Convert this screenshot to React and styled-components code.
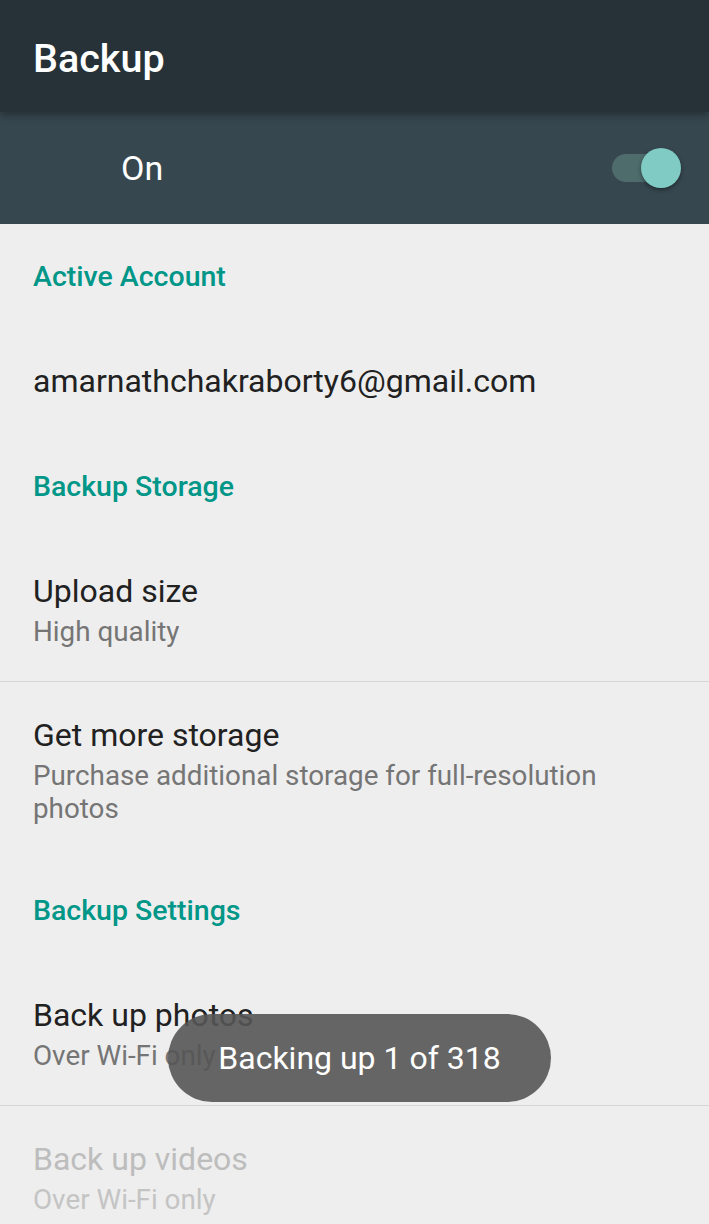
import React from "react";
import styled, { createGlobalStyle } from "styled-components";

const GlobalStyle = createGlobalStyle`
  html, body {
    margin: 0;
    padding: 0;
    background: #eeeeee;
  }
  body {
    font-family: Roboto, "Noto Sans", sans-serif;
    -webkit-font-smoothing: antialiased;
  }
`;

const Screen = styled.div`
  position: relative;
  width: 709px;
  height: 1224px;
  overflow: hidden;
  background: #eeeeee;
`;

const AppBar = styled.header`
  position: relative;
  z-index: 2;
  height: 112px;
  box-sizing: border-box;
  display: flex;
  align-items: center;
  padding: 5px 0 0 33px;
  background: #263238;
  box-shadow: 0 3px 8px rgba(0, 0, 0, 0.35);
`;

const Title = styled.h1`
  margin: 0;
  color: #ffffff;
  font-size: 39.5px;
  font-weight: 500;
`;

const SwitchBar = styled.div`
  height: 112px;
  display: flex;
  align-items: center;
  justify-content: space-between;
  padding: 0 28px 0 121px;
  background: #37474f;
`;

const SwitchLabel = styled.span`
  color: #ffffff;
  font-size: 34px;
`;

const Toggle = styled.div`
  position: relative;
  width: 69px;
  height: 40px;
`;

const Track = styled.div`
  position: absolute;
  left: 0;
  top: 6px;
  width: 52px;
  height: 28px;
  border-radius: 14px;
  background: #4e6c6c;
`;

const Thumb = styled.div`
  position: absolute;
  right: 0;
  top: 0;
  width: 40px;
  height: 40px;
  border-radius: 50%;
  background: #80cbc4;
  box-shadow: 0 2px 4px rgba(0, 0, 0, 0.4);
`;

const Subheader = styled.div`
  height: 104px;
  display: flex;
  align-items: center;
  padding-left: 33px;
  color: #009688;
  font-size: 28.5px;
  font-weight: 500;
`;

const SingleRow = styled.div`
  height: 106px;
  display: flex;
  align-items: center;
  padding-left: 33px;
  color: #212121;
  font-size: 32px;
`;

const Item = styled.div`
  padding: 31px 33px 33px;
  border-bottom: ${(p) => (p.$divider ? "1px solid #d6d6d6" : "none")};
`;

const ItemTitle = styled.div`
  line-height: 44px;
  font-size: 32px;
  color: ${(p) => (p.$disabled ? "#bdbdbd" : "#212121")};
`;

const ItemSub = styled.div`
  margin-top: 2px;
  line-height: 33px;
  font-size: 27.8px;
  color: ${(p) => (p.$disabled ? "#c4c4c4" : "#757575")};
`;

const Toast = styled.div`
  position: absolute;
  left: 168px;
  top: 1014px;
  width: 383px;
  height: 88px;
  border-radius: 44px;
  background: rgba(85, 85, 85, 0.9);
  display: flex;
  align-items: center;
  justify-content: center;
  color: #ffffff;
  font-size: 32px;
`;

export default function App() {
  return (
    <Screen>
      <GlobalStyle />
      <AppBar>
        <Title>Backup</Title>
      </AppBar>
      <SwitchBar>
        <SwitchLabel>On</SwitchLabel>
        <Toggle>
          <Track />
          <Thumb />
        </Toggle>
      </SwitchBar>

      <Subheader>Active Account</Subheader>
      <SingleRow>amarnathchakraborty6@gmail.com</SingleRow>

      <Subheader>Backup Storage</Subheader>
      <Item $divider>
        <ItemTitle>Upload size</ItemTitle>
        <ItemSub>High quality</ItemSub>
      </Item>
      <Item>
        <ItemTitle>Get more storage</ItemTitle>
        <ItemSub>Purchase additional storage for full-resolution photos</ItemSub>
      </Item>

      <Subheader>Backup Settings</Subheader>
      <Item $divider>
        <ItemTitle>Back up photos</ItemTitle>
        <ItemSub>Over Wi-Fi only</ItemSub>
      </Item>
      <Item>
        <ItemTitle $disabled>Back up videos</ItemTitle>
        <ItemSub $disabled>Over Wi-Fi only</ItemSub>
      </Item>

      <Toast>Backing up 1 of 318</Toast>
    </Screen>
  );
}
